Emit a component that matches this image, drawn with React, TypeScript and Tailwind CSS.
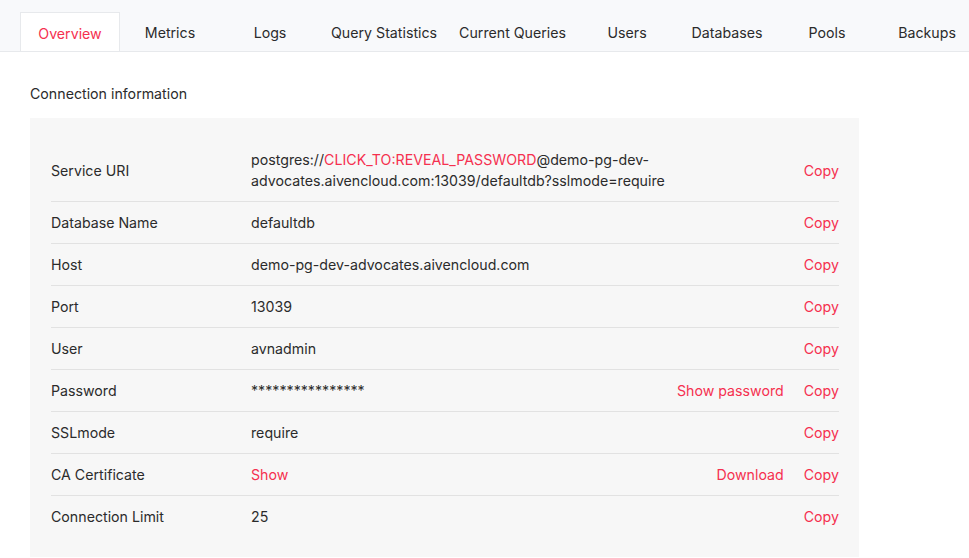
import React from "react";

const tabs = [
  "Overview",
  "Metrics",
  "Logs",
  "Query Statistics",
  "Current Queries",
  "Users",
  "Databases",
  "Pools",
  "Backups",
];

type Row = {
  label: string;
  value: React.ReactNode;
  extra?: string;
};

const red = "text-[#f5304f]";

const rows: Row[] = [
  {
    label: "Service URI",
    value: (
      <>
        postgres://<span className={red}>CLICK_TO:REVEAL_PASSWORD</span>@demo-pg-dev-
        <br />
        advocates.aivencloud.com:13039/defaultdb?sslmode=require
      </>
    ),
  },
  { label: "Database Name", value: "defaultdb" },
  { label: "Host", value: "demo-pg-dev-advocates.aivencloud.com" },
  { label: "Port", value: "13039" },
  { label: "User", value: "avnadmin" },
  { label: "Password", value: "****************", extra: "Show password" },
  { label: "SSLmode", value: "require" },
  {
    label: "CA Certificate",
    value: <span className={red}>Show</span>,
    extra: "Download",
  },
  { label: "Connection Limit", value: "25" },
];

export default function App() {
  return (
    <div className="w-[969px] h-[558px] overflow-hidden bg-white font-['Inter',sans-serif] text-[14.2px] leading-[21px] text-[#2b2b2b]">
      <div className="h-[52px] bg-[#f8f9fb] border-b border-[#e7e9ec] flex items-end pl-[20px] whitespace-nowrap overflow-hidden">
        {tabs.map((t, i) => (
          <div
            key={t}
            className={
              i === 0
                ? "shrink-0 h-[40px] min-w-[100px] px-[11px] pt-[2px] flex items-center justify-center bg-white border border-b-0 border-[#e7e9ec] text-[#f5304f] -mb-px"
                : "shrink-0 h-[40px] min-w-[100px] px-[11px] pt-[2px] flex items-center justify-center text-[#2b2b2b]"
            }
          >
            {t}
          </div>
        ))}
      </div>
      <div className="px-[30px]">
        <div className="mt-[31px] mb-[14px]">Connection information</div>
        <div className="w-[829px] bg-[#f7f7f7] pl-[21px] pr-[20px] pt-[21px] pb-[20px]">
          {rows.map((r, i) => (
            <div
              key={r.label}
              className={
                i < rows.length - 1
                  ? "flex items-center py-[10px] border-b border-[#e2e2e2]"
                  : "flex items-center py-[10px]"
              }
            >
              <div className="w-[200px] shrink-0">{r.label}</div>
              <div className="flex-1">{r.value}</div>
              <div className="flex items-center gap-[20px]">
                {r.extra && <span className={red}>{r.extra}</span>}
                <span className={red}>Copy</span>
              </div>
            </div>
          ))}
        </div>
      </div>
    </div>
  );
}
